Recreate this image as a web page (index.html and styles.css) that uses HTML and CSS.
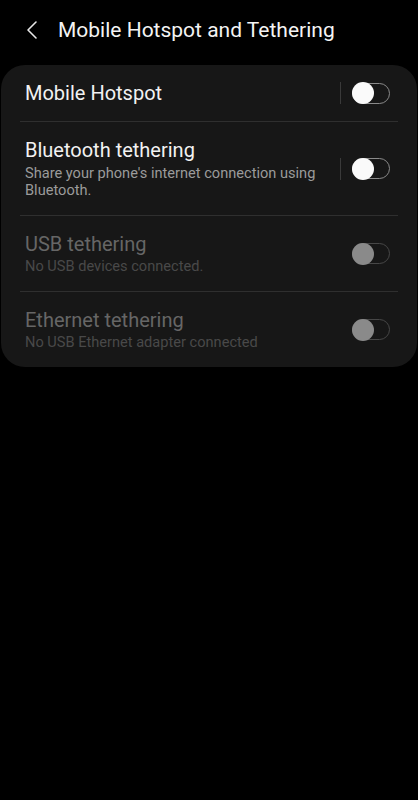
FILE: index.html
```html
<!DOCTYPE html>
<html lang="en">
<head>
  <meta charset="UTF-8">
  <title>Mobile Hotspot and Tethering</title>
  <link rel="stylesheet" href="styles.css">
</head>
<body>

  <header class="topbar">
    <svg class="back" width="12" height="20" viewBox="0 0 12 20">
      <path d="M10 2 L2 10 L10 18" fill="none" stroke="#e8e8e8" stroke-width="1.6" stroke-linecap="round" stroke-linejoin="round"/>
    </svg>
    <h1>Mobile Hotspot and Tethering</h1>
  </header>

  <div class="card">
    <div class="row row-single">
      <div class="text">
        <div class="title">Mobile Hotspot</div>
      </div>
      <span class="sep"></span>
      <span class="switch"></span>
    </div>

    <div class="row">
      <div class="text">
        <div class="title">Bluetooth tethering</div>
        <div class="sub">Share your phone's internet connection using Bluetooth.</div>
      </div>
      <span class="sep"></span>
      <span class="switch"></span>
    </div>

    <div class="row disabled">
      <div class="text">
        <div class="title">USB tethering</div>
        <div class="sub">No USB devices connected.</div>
      </div>
      <span class="switch"></span>
    </div>

    <div class="row disabled last">
      <div class="text">
        <div class="title">Ethernet tethering</div>
        <div class="sub">No USB Ethernet adapter connected</div>
      </div>
      <span class="switch"></span>
    </div>
  </div>

</body>
</html>
```

FILE: styles.css
```css
body {
  margin: 0;
  background-color: #000;
  color: #f2f2f2;
  font-family: Roboto, "Liberation Sans", sans-serif;
}

.topbar {
  display: flex;
  align-items: center;
  height: 65px;
  padding: 0 0 6px 26px;
  box-sizing: border-box;
}

.back {
  margin-right: 20px;
}

h1 {
  margin: 0;
  font-size: 21px;
  font-weight: 400;
  color: #f4f4f4;
}

.card {
  margin: 0 1px;
  padding: 0 19px;
  background-color: #171717;
  border-radius: 24px;
}

.row {
  display: flex;
  align-items: center;
  padding: 16px 8px 16px 5px;
  border-bottom: 1px solid #2f2f2f;
}

.row-single {
  min-height: 56px;
  padding-top: 0;
  padding-bottom: 0;
}

.row.last {
  border-bottom: none;
}

.text {
  flex: 1;
}

.title {
  font-size: 20px;
  line-height: 24px;
}

.sub {
  margin-top: 3px;
  padding-right: 10px;
  font-size: 14.6px;
  line-height: 17px;
  color: #9b9b9b;
}

.disabled .title {
  color: #666;
}

.disabled .sub {
  margin-top: 2px;
  color: #494949;
}

.sep {
  width: 1px;
  height: 22px;
  margin-right: 11px;
  background-color: #3a3a3a;
}

.switch {
  position: relative;
  width: 38px;
  height: 21px;
  box-sizing: border-box;
  border: 1.5px solid #8a8a8a;
  border-radius: 11px;
}

.switch::before {
  content: "";
  position: absolute;
  left: -1.5px;
  top: -1.5px;
  width: 22px;
  height: 22px;
  border-radius: 50%;
  background-color: #fafafa;
}

.disabled .switch {
  border-color: #474747;
}

.disabled .switch::before {
  background-color: #8a8a8a;
}
```
